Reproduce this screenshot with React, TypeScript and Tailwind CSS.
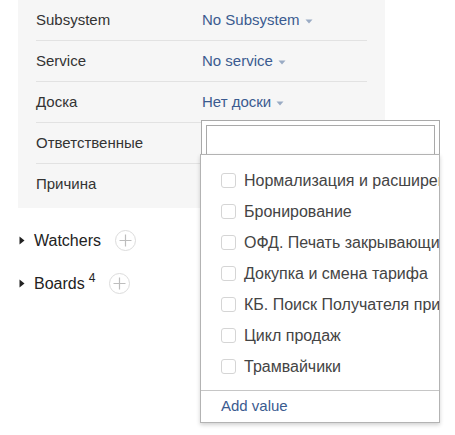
import { useState } from 'react';

const fields = [
  { label: 'Subsystem', value: 'No Subsystem' },
  { label: 'Service', value: 'No service' },
  { label: 'Доска', value: 'Нет доски' },
  { label: 'Ответственные', value: '' },
  { label: 'Причина', value: '' },
];

const options = [
  'Нормализация и расширение',
  'Бронирование',
  'ОФД. Печать закрывающих документов',
  'Докупка и смена тарифа',
  'КБ. Поиск Получателя при переводе',
  'Цикл продаж',
  'Трамвайчики',
];

function Caret() {
  return (
    <svg width="8" height="5" viewBox="0 0 8 5" className="ml-[5px] mt-[2px]">
      <path d="M0.5 0.5 L7.5 0.5 L4 4.5 Z" fill="#9aabc4" />
    </svg>
  );
}

function PlusCircle() {
  return (
    <span className="w-[21px] h-[21px] rounded-full border border-[#dcdcdc] flex items-center justify-center">
      <svg width="13" height="13" viewBox="0 0 13 13">
        <path d="M6.5 0.5 V12.5 M0.5 6.5 H12.5" stroke="#bdbdbd" strokeWidth="1.2" />
      </svg>
    </span>
  );
}

function Toggle({ label, count }: { label: string; count?: number }) {
  return (
    <div className="flex items-center h-[43px]">
      <svg width="6" height="9" viewBox="0 0 6 9" className="mr-[9px] ml-[1px]">
        <path d="M0.5 0.5 L5.5 4.5 L0.5 8.5 Z" fill="#222" />
      </svg>
      <span className="text-[16px] text-[#222]">{label}</span>
      {count !== undefined && (
        <sup className="text-[12px] text-[#222] ml-[4px] -top-[6px]">{count}</sup>
      )}
      <span className="ml-[14px]">
        <PlusCircle />
      </span>
    </div>
  );
}

export default function App() {
  const [checked, setChecked] = useState<string[]>([]);

  return (
    <div className="relative w-[455px] h-[435px] bg-white font-['Liberation_Sans',Arial,sans-serif] overflow-hidden">
      <div className="pl-[18px]">
        {/* Fields panel */}
        <div className="w-[367px] bg-[#f6f6f6] px-[18px] pb-[4px]">
          {fields.map((f, i) => (
            <div
              key={f.label}
              className={
                'flex items-center text-[15px] ' +
                (i === 0 ? 'h-[40px]' : 'h-[41px] border-t border-[#e2e2e2]')
              }
            >
              <span className="w-[166px] text-[#333]">{f.label}</span>
              {f.value && (
                <span className="flex items-center text-[#3b5b90]">
                  {f.value}
                  <Caret />
                </span>
              )}
            </div>
          ))}
        </div>

        {/* Collapsible sections */}
        <div className="pt-[11px]">
          <Toggle label="Watchers" />
          <Toggle label="Boards" count={4} />
        </div>
      </div>

      {/* Multi-select dropdown */}
      <div className="absolute left-[201px] top-[120px] w-[239px] h-[36px] bg-white border border-[#a9a9a9] p-[4px]">
        <input className="w-full h-[32px] border border-[#a9a9a9] outline-none" />
      </div>
      <div className="absolute left-[200px] top-[154px] w-[240px] bg-white border border-[#b3b3b3] shadow-[0_2px_4px_rgba(0,0,0,0.18)]">
        <div className="pt-[10px] pb-[8px] overflow-hidden">
          {options.map((o) => (
            <label
              key={o}
              className="flex items-center h-[31px] pl-[20px] whitespace-nowrap cursor-pointer"
            >
              <span
                onClick={() =>
                  setChecked((prev) =>
                    prev.includes(o) ? prev.filter((x) => x !== o) : [...prev, o]
                  )
                }
                className={
                  'w-[15px] h-[15px] shrink-0 rounded-[3px] border border-[#d5d5d5] ' +
                  (checked.includes(o) ? 'bg-[#3b5b90]' : 'bg-white')
                }
              />
              <span className="ml-[8px] text-[16px] text-[#444]">{o}</span>
            </label>
          ))}
        </div>
        <div className="h-[32px] border-t border-[#c6c6c6] flex items-center pl-[20px] text-[15px] text-[#3b5b90]">
          Add value
        </div>
      </div>
    </div>
  );
}
